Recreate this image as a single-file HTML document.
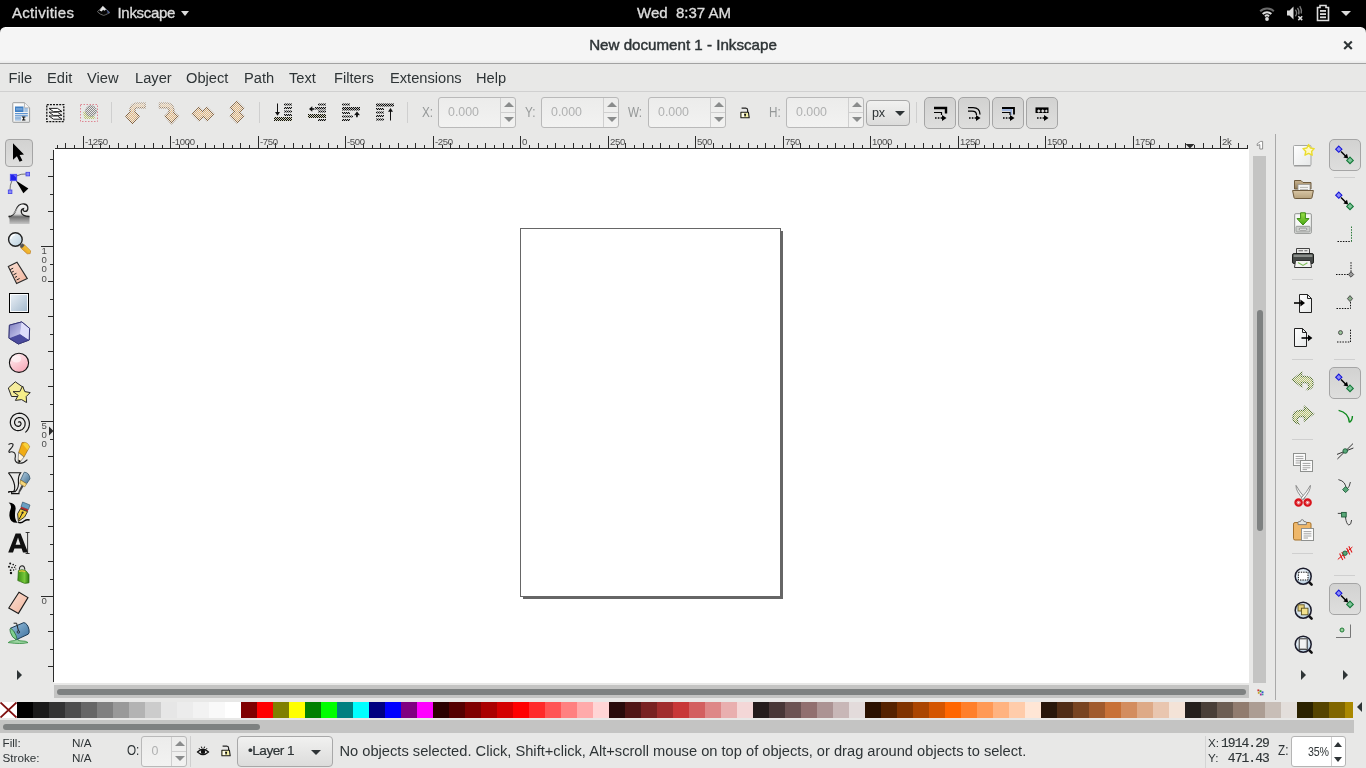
<!DOCTYPE html>
<html lang="en"><head><meta charset="utf-8"><title>New document 1 - Inkscape</title>
<style>
*{box-sizing:border-box;margin:0;padding:0}
html,body{width:1366px;height:768px;overflow:hidden;background:#e8e8e7;}
body{font-family:"Liberation Sans","DejaVu Sans",sans-serif;font-size:14.67px;color:#2e3436;position:relative}
#root{position:absolute;left:0;top:0;width:1366px;height:768px;overflow:hidden;background:#e8e8e7;will-change:transform}
.abs{position:absolute}
.ic{position:absolute;overflow:visible}
#topbar{position:absolute;left:0;top:0;width:1366px;height:34px;background:#000;color:#dcdcdc;font-weight:normal;font-size:15px;-webkit-text-stroke:0.35px #dcdcdc}
#topbar span{position:absolute;top:5px;white-space:nowrap;line-height:16px}
#title{position:absolute;left:0;top:27px;width:1366px;height:37px;background:linear-gradient(#ffffff 0,#ffffff 1px,#f5f5f5 1.5px,#f5f5f5 33px,#e9e9e9 36px);border-radius:5.5px 5.5px 0 0;border-bottom:1px solid #a2a2a2;}
#title .t{position:absolute;left:0;width:1366px;top:9px;text-align:center;font-weight:normal;font-size:15.15px;line-height:17px;color:#2e3436;-webkit-text-stroke:0.45px #2e3436}
#menubar{position:absolute;left:0;top:64px;width:1366px;height:28px;border-bottom:1px solid #d0d0d0;background:#e8e8e7}
#menubar span{position:absolute;top:6px;line-height:17px;white-space:nowrap;color:#2e3436}
.vsep{position:absolute;width:1px;background:#cfcfcf}
.hsep{position:absolute;height:1px;background:#cfcfcf}
.lbl{position:absolute;color:#959898;white-space:nowrap;line-height:17px;font-size:14.67px;transform:scaleX(0.8);transform-origin:0 0}
.spin{position:absolute;border:1px solid #b9b9b9;border-radius:3px;background:linear-gradient(#ececeb,#f2f2f1);}
.spin .v{position:absolute;left:0;top:0;line-height:17px;color:#b0b1b1;white-space:nowrap;font-size:12.4px}
.spin .d{position:absolute;top:0;bottom:0;width:1px;background:#cfcfcf}
.spin .h{position:absolute;height:1px;background:#cfcfcf}
.tri{position:absolute;width:0;height:0;border-left:5px solid transparent;border-right:5px solid transparent}
.tri.up{border-bottom:5px solid #8a8c8c}
.tri.dn{border-top:5px solid #8a8c8c}
.btn{position:absolute;border:1px solid #a8a8a8;border-radius:4px;background:linear-gradient(#f1f1f0,#dcdcdb);}
.tog{position:absolute;border:1px solid #a5a5a5;border-radius:5px;background:linear-gradient(#d2d2d1,#dededd);}
.rtxt{position:absolute;font-size:9.6px;line-height:10px;color:#4c4c4c;white-space:nowrap;letter-spacing:-0.35px}
.sm{position:absolute;font-size:11.7px;line-height:14px;white-space:nowrap;color:#2e3436}
.mono{position:absolute;font-family:"Liberation Mono","DejaVu Sans Mono",monospace;font-size:13px;letter-spacing:-0.97px;line-height:14px;white-space:pre;color:#2e3436;-webkit-text-stroke:0.15px #2e3436}
</style></head>
<body><div id="root">

<svg width="0" height="0" style="position:absolute"><defs>
<pattern id="stT" width="2" height="2" patternUnits="userSpaceOnUse"><rect width="1" height="1" fill="#e6b67a"/><rect x="1" y="1" width="1" height="1" fill="#e6b67a"/></pattern>
<pattern id="stTd" width="2" height="2" patternUnits="userSpaceOnUse"><rect width="1" height="1" fill="#86623c"/><rect x="1" y="1" width="1" height="1" fill="#86623c"/></pattern>
<pattern id="stK" width="2" height="2" patternUnits="userSpaceOnUse"><rect width="2" height="2" fill="#000" fill-opacity="0.22"/><rect width="1" height="1" fill="#0c0c0c"/><rect x="1" y="1" width="1" height="1" fill="#0c0c0c"/></pattern>
<pattern id="stY" width="2" height="2" patternUnits="userSpaceOnUse"><rect width="2" height="2" fill="#d0d0b8"/><rect width="1" height="1" fill="#0c0c0c"/><rect x="1" y="1" width="1" height="1" fill="#0c0c0c"/></pattern>
<pattern id="stG" width="2" height="2" patternUnits="userSpaceOnUse"><rect width="1" height="1" fill="#8a8a8a"/><rect x="1" y="1" width="1" height="1" fill="#8a8a8a"/></pattern>
<pattern id="stO" width="2" height="2" patternUnits="userSpaceOnUse"><rect width="1" height="1" fill="#b9c66c"/><rect x="1" y="1" width="1" height="1" fill="#b9c66c"/></pattern>
<pattern id="stOd" width="2" height="2" patternUnits="userSpaceOnUse"><rect width="1" height="1" fill="#5c7832"/><rect x="1" y="1" width="1" height="1" fill="#5c7832"/></pattern>
<linearGradient id="fadeTop" x1="0" y1="0" x2="0" y2="1"><stop offset="0" stop-color="#e8e8e7" stop-opacity="0.6"/><stop offset="1" stop-color="#e8e8e7" stop-opacity="0"/></linearGradient>
<linearGradient id="gPage" x1="0" y1="0" x2="1" y2="1"><stop offset="0" stop-color="#ffffff"/><stop offset="1" stop-color="#e6e8e8"/></linearGradient>
<linearGradient id="gBlue" x1="0" y1="0" x2="1" y2="1"><stop offset="0" stop-color="#eef3f8"/><stop offset="1" stop-color="#9fb6cb"/></linearGradient>
<linearGradient id="gPink" x1="0.2" y1="0" x2="0.8" y2="1"><stop offset="0" stop-color="#fff0f2"/><stop offset="1" stop-color="#f7a6b6"/></linearGradient>
<linearGradient id="gSalmon" x1="0" y1="0" x2="1" y2="1"><stop offset="0" stop-color="#fbe0d4"/><stop offset="1" stop-color="#f0b49c"/></linearGradient>
<linearGradient id="gGray" x1="0" y1="0" x2="0" y2="1"><stop offset="0" stop-color="#f6f6f6"/><stop offset="0.5" stop-color="#dcdcdc"/><stop offset="0.64" stop-color="#707070"/><stop offset="1" stop-color="#c6c6c6"/></linearGradient>
<linearGradient id="gLens" x1="0" y1="0" x2="1" y2="1"><stop offset="0" stop-color="#f4f9fc"/><stop offset="1" stop-color="#b9d0de"/></linearGradient>
<linearGradient id="gHandle" x1="1" y1="0" x2="0" y2="1"><stop offset="0" stop-color="#fbe04a"/><stop offset="1" stop-color="#e48a14"/></linearGradient>
<linearGradient id="gFold" x1="0" y1="0" x2="0" y2="1"><stop offset="0" stop-color="#c9b491"/><stop offset="1" stop-color="#8f7a58"/></linearGradient>
<linearGradient id="gFold2" x1="0" y1="0" x2="0" y2="1"><stop offset="0" stop-color="#d9c7a6"/><stop offset="1" stop-color="#b7a27c"/></linearGradient>
<linearGradient id="gGreen" x1="0" y1="0" x2="0" y2="1"><stop offset="0" stop-color="#9be04a"/><stop offset="1" stop-color="#4aa814"/></linearGradient>
<linearGradient id="gCube" x1="0" y1="0" x2="1" y2="1"><stop offset="0" stop-color="#7d7dbd"/><stop offset="1" stop-color="#d0d0f4"/></linearGradient>
<linearGradient id="gBucket" x1="0" y1="0" x2="1" y2="1"><stop offset="0" stop-color="#9cc3df"/><stop offset="1" stop-color="#3a6f9d"/></linearGradient>
<linearGradient id="gCan" x1="0" y1="0" x2="1" y2="0"><stop offset="0" stop-color="#3c8f14"/><stop offset="0.6" stop-color="#76c83a"/><stop offset="1" stop-color="#2f7a10"/></linearGradient>
<linearGradient id="gPen" x1="0" y1="0" x2="1" y2="1"><stop offset="0" stop-color="#b9d4e6"/><stop offset="1" stop-color="#3f6c8f"/></linearGradient>
<radialGradient id="gLensBtn" cx="0.4" cy="0.35" r="0.7"><stop offset="0" stop-color="#ffffff"/><stop offset="1" stop-color="#b5cde0"/></radialGradient>
</defs></svg>

<div id="topbar">
<span style="left:12px;letter-spacing:0.3px">Activities</span>
<span style="left:117.5px;letter-spacing:-0.3px">Inkscape</span>
<span style="left:637px;letter-spacing:0px">Wed&nbsp; 8:37 AM</span>
<svg class="ic" style="left:95.8px;top:2.3px" width="16" height="16" viewBox="0 0 16 16"><g transform="translate(0.3,1.1) scale(0.93)"><path d="M7 3.4 L14.6 10.2 Q8.5 13.4 7.8 13.2 Q4 12.3 1.2 9.3 Z" fill="#060606" stroke="#6e6e6e" stroke-width="1"/>
<path d="M7 3.2 L10.6 6.8 L8.6 8.2 L7.3 7.2 L5.9 9 L3.4 8 Z" fill="#e6e6e6"/>
<path d="M9.2 5.4 L14.2 10 L12.2 11 Q12 8 9.2 5.4Z" fill="#4e64a4"/></g></svg>

<div class="tri dn" style="left:181px;top:11px;border-top-color:#dcdcdc;border-left-width:4.5px;border-right-width:4.5px"></div>
<svg class="ic" style="left:1258.5px;top:5px" width="16" height="16" viewBox="0 0 16 16"><g fill="none" stroke="#dcdcdc" stroke-linecap="butt">
<path d="M1.2 6.2 A9.6 9.6 0 0 1 14.8 6.2" stroke-width="2" stroke="#6a6a6a"/>
<path d="M3.7 9 A6 6 0 0 1 12.3 9" stroke-width="2"/>
<path d="M5.9 11.3 A3 3 0 0 1 10.1 11.3" stroke-width="1.8"/></g>
<circle cx="8" cy="14" r="1.9" fill="#dcdcdc"/></svg>

<svg class="ic" style="left:1285.5px;top:5px" width="18" height="16" viewBox="0 0 18 16"><path d="M1 5.5 H3.5 L7.5 1.5 V14.5 L3.5 10.5 H1 Z" fill="#dcdcdc"/>
<g fill="none" stroke="#777" stroke-width="1.4"><path d="M9.3 4.8 A4.5 4.5 0 0 1 9.3 11.2"/><path d="M11.5 2.8 A7.5 7.5 0 0 1 12.6 9.5"/><path d="M13.8 1.2 A10 10 0 0 1 15.2 8.5"/></g>
<path d="M12.3 11.2 L16.2 15.1 M16.2 11.2 L12.3 15.1" stroke="#dcdcdc" stroke-width="1.5"/></svg>

<svg class="ic" style="left:1314.5px;top:4px" width="16" height="18" viewBox="0 0 16 18"><path d="M5 1.5 H11 V3.5 H13.5 V16.5 H2.5 V3.5 H5 Z" fill="none" stroke="#dcdcdc" stroke-width="1.6"/>
<rect x="5" y="6" width="6" height="1.8" fill="#dcdcdc"/><rect x="5" y="9.2" width="6" height="1.8" fill="#dcdcdc"/><rect x="5" y="12.4" width="6" height="1.8" fill="#dcdcdc"/></svg>

<div class="tri dn" style="left:1341px;top:11px;border-top-color:#dcdcdc;border-left-width:5px;border-right-width:5px"></div>
</div>
<div id="title"><div class="t">New document 1 - Inkscape</div>
<svg class="ic" style="left:1342px;top:12px" width="11" height="11" viewBox="0 0 11 11"><path d="M2.2 2.5 L9.8 10.1 M9.8 2.5 L2.2 10.1" stroke="#2e3436" stroke-width="2.1" fill="none"/></svg>
</div>
<div id="menubar">
<span style="left:8.5px">File</span>
<span style="left:47px">Edit</span>
<span style="left:87px">View</span>
<span style="left:135px">Layer</span>
<span style="left:186px">Object</span>
<span style="left:244px">Path</span>
<span style="left:289px">Text</span>
<span style="left:334px">Filters</span>
<span style="left:390px">Extensions</span>
<span style="left:476px">Help</span>
</div>
<svg class="ic" style="left:9px;top:100px" width="24" height="24" viewBox="0 0 24 24"><path d="M3.8 3.2 Q3.8 2.7 4.3 2.7 H15.5 L20.6 7.8 V21.8 Q20.6 22.3 20.1 22.3 H4.3 Q3.8 22.3 3.8 21.8 Z" fill="url(#gPage)" stroke="#9a9c9c" stroke-width="1"/>
<path d="M15.5 2.7 V7.8 H20.6" fill="#f4f4f4" stroke="#aaa" stroke-width="0.8"/>
<rect x="6" y="6.5" width="8.5" height="5.5" fill="#3f7fc4"/><rect x="15.2" y="8.5" width="3.6" height="1" fill="#5b93d1"/><rect x="15.2" y="10.5" width="3.6" height="1" fill="#5b93d1"/>
<rect x="6" y="13" width="12.8" height="1.2" fill="#5b93d1"/><rect x="6" y="15.2" width="12.8" height="1.2" fill="#5b93d1"/><rect x="6" y="17.4" width="6" height="1.2" fill="#5b93d1"/><rect x="6" y="19.4" width="6" height="1" fill="#7aa9dc"/>
<rect x="7" y="8" width="6.5" height="2.4" fill="#8db6e3" opacity="0.6"/>
<path d="M13 17 H16.4 M13 20 H16.4 M14.7 17 V20" stroke="#111" stroke-width="1.2"/></svg>

<svg class="ic" style="left:43px;top:100px" width="24" height="24" viewBox="0 0 24 24"><rect x="3.8" y="4.6" width="17" height="17" fill="none" stroke="#111" stroke-width="1.3" stroke-dasharray="2 1.1"/>
<g fill="#fff" stroke="#222" stroke-width="1"><path d="M6 16 L14.5 16 L19 19.2 L10.5 19.2 Z"/><path d="M6 12.2 L14.5 12.2 L19 15.4 L10.5 15.4 Z"/><path d="M6 8.4 L14.5 8.4 L19 11.6 L10.5 11.6 Z"/></g></svg>

<svg class="ic" style="left:77px;top:100px" width="24" height="24" viewBox="0 0 24 24"><rect x="3.5" y="4.5" width="17" height="17" fill="none" stroke="#dc7c88" stroke-width="0.9" stroke-dasharray="1.5 1.5"/>
<path d="M6 12.5 L9.5 10.5 L16 13.5 L18.5 19 L7.5 19 Z" fill="url(#stO)"/>
<circle cx="14" cy="11" r="5.4" fill="url(#stG)"/><circle cx="14" cy="11" r="5.4" fill="none" stroke="#777" stroke-width="0.7" stroke-dasharray="1 1"/></svg>

<div class="vsep" style="left:111px;top:102px;height:21px"></div>
<svg class="ic" style="left:123px;top:100px" width="24" height="24" viewBox="0 0 24 24"><path d="M22.1 2.9 V7.7 H14 A2 2 0 0 0 12 9.7 V12.2 L16 16 L9.45 23.6 L2.9 16 L7 12.2 V9.9 A7 7 0 0 1 14 2.9 Z" fill="url(#stT)"/><path d="M22.1 2.9 V7.7 H14 A2 2 0 0 0 12 9.7 V12.2 L16 16 L9.45 23.6 L2.9 16 L7 12.2 V9.9 A7 7 0 0 1 14 2.9 Z" fill="none" stroke="url(#stTd)" stroke-width="1.5"/><rect x="0" y="1" width="24" height="13" fill="url(#fadeTop)"/></svg>

<svg class="ic" style="left:157px;top:100px" width="24" height="24" viewBox="0 0 24 24"><path d="M2.5 2.9 V7.7 H10 A2 2 0 0 1 12 9.7 V12.3 L8 16.3 L14.5 23.3 L21.2 16.3 L16.8 12.3 V9.9 A7 7 0 0 0 9.8 2.9 Z" fill="url(#stT)"/><path d="M2.5 2.9 V7.7 H10 A2 2 0 0 1 12 9.7 V12.3 L8 16.3 L14.5 23.3 L21.2 16.3 L16.8 12.3 V9.9 A7 7 0 0 0 9.8 2.9 Z" fill="none" stroke="url(#stTd)" stroke-width="1.5"/><rect x="0" y="1" width="24" height="13" fill="url(#fadeTop)"/></svg>

<svg class="ic" style="left:191px;top:100px" width="24" height="24" viewBox="0 0 24 24"><path d="M1.5 14 L8 7.5 L12 11.5 L16 7.5 L22.5 14 L16 20.5 L12 16.5 L8 20.5 Z" fill="url(#stT)"/><path d="M1.5 14 L8 7.5 L12 11.5 L16 7.5 L22.5 14 L16 20.5 L12 16.5 L8 20.5 Z" fill="none" stroke="url(#stTd)" stroke-width="1.5"/></svg>

<svg class="ic" style="left:225px;top:100px" width="24" height="24" viewBox="0 0 24 24"><path d="M12 1.5 L18.5 8 L14.5 12 L18.5 16 L12 22.7 L5.5 16 L9.5 12 L5.5 8 Z" fill="url(#stT)"/><path d="M12 1.5 L18.5 8 L14.5 12 L18.5 16 L12 22.7 L5.5 16 L9.5 12 L5.5 8 Z" fill="none" stroke="url(#stTd)" stroke-width="1.5"/></svg>

<div class="vsep" style="left:259px;top:102px;height:21px"></div>
<svg class="ic" style="left:271px;top:100px" width="24" height="24" viewBox="0 0 24 24"><g transform="translate(3,0)"><g fill="url(#stK)"><rect x="10" y="3.5" width="8" height="2"/><rect x="10" y="7" width="8" height="2"/><rect x="10" y="10.5" width="8" height="2"/><rect x="10" y="14" width="8" height="2"/>
</g><rect x="3" y="3.5" width="1" height="10" fill="#111"/><path d="M1 12 H6 L3.5 15.8 Z" fill="#111"/><rect x="0" y="17" width="18" height="4" fill="url(#stY)"/></g></svg>

<svg class="ic" style="left:305px;top:100px" width="24" height="24" viewBox="0 0 24 24"><g transform="translate(3,0)"><g fill="url(#stK)"><rect x="10" y="3.5" width="8" height="2"/><rect x="7" y="7" width="11" height="2.5"/><rect x="10" y="10.5" width="8" height="2"/><rect x="10" y="19" width="8" height="2"/></g><path d="M1 9 L4.2 6.2 L4.4 8.2 L6.4 8.2 V9.8 H4.4 L4.2 11.8 Z" fill="#111"/><rect x="0" y="14" width="18" height="4" fill="url(#stY)"/></g></svg>

<svg class="ic" style="left:339px;top:100px" width="24" height="24" viewBox="0 0 24 24"><g transform="translate(3,0)"><g fill="url(#stK)"><rect x="0" y="3.5" width="8" height="2"/><rect x="0" y="12" width="8" height="2"/><rect x="0" y="15.5" width="11" height="2"/><rect x="0" y="19" width="8" height="2"/></g><path d="M12 15.2 L15 11.6 L18 15.2 L16 15 L15.6 17.2 H14.2 L14 15 Z" fill="#111"/><rect x="0" y="7" width="18" height="3.5" fill="url(#stK)"/></g></svg>

<svg class="ic" style="left:373px;top:100px" width="24" height="24" viewBox="0 0 24 24"><g transform="translate(3,0)"><g fill="url(#stK)"><rect x="0" y="3.5" width="18" height="3"/><rect x="0" y="8" width="8" height="2"/><rect x="0" y="11.5" width="8" height="2"/><rect x="0" y="15" width="8" height="2"/><rect x="0" y="18.5" width="8" height="2"/>
</g><rect x="14" y="10.5" width="1" height="10" fill="#111"/><path d="M12 11.8 L14.5 8 L17 11.8 Z" fill="#111"/></g></svg>

<div class="vsep" style="left:407px;top:102px;height:21px"></div>
<span class="lbl" style="left:422px;top:104px">X:</span>
<div class="spin" style="left:438px;top:97px;width:78px;height:31px;"><span class="v" style="left:9px;top:6px">0.000</span><div class="d" style="right:14px"></div><div class="h" style="right:0;width:14px;top:14px"></div><div class="tri up" style="left:64.5px;top:4.25px"></div><div class="tri dn" style="left:64.5px;top:18.75px"></div></div>
<span class="lbl" style="left:525px;top:104px">Y:</span>
<div class="spin" style="left:541px;top:97px;width:78px;height:31px;"><span class="v" style="left:9px;top:6px">0.000</span><div class="d" style="right:14px"></div><div class="h" style="right:0;width:14px;top:14px"></div><div class="tri up" style="left:64.5px;top:4.25px"></div><div class="tri dn" style="left:64.5px;top:18.75px"></div></div>
<span class="lbl" style="left:628px;top:104px">W:</span>
<div class="spin" style="left:648px;top:97px;width:78px;height:31px;"><span class="v" style="left:9px;top:6px">0.000</span><div class="d" style="right:14px"></div><div class="h" style="right:0;width:14px;top:14px"></div><div class="tri up" style="left:64.5px;top:4.25px"></div><div class="tri dn" style="left:64.5px;top:18.75px"></div></div>
<span class="lbl" style="left:769px;top:104px">H:</span>
<div class="spin" style="left:786px;top:97px;width:78px;height:31px;"><span class="v" style="left:9px;top:6px">0.000</span><div class="d" style="right:14px"></div><div class="h" style="right:0;width:14px;top:14px"></div><div class="tri up" style="left:64.5px;top:4.25px"></div><div class="tri dn" style="left:64.5px;top:18.75px"></div></div>
<svg class="ic" style="left:738.5px;top:106.5px" width="12" height="12" viewBox="0 0 12 12"><path d="M2.6 1.1 H6.8 Q8.6 1.1 8.6 3 V5" fill="none" stroke="#222" stroke-width="1.2"/>
<path d="M1.9 5.2 H9.4 L10.2 10.8 H1.9 Z" fill="#f4f0a8" stroke="#1a1a1a" stroke-width="1.1" stroke-linejoin="round"/><path d="M2.8 6 H5 V10 H2.8 Z" fill="#fff" opacity="0.8"/><path d="M5 6.8 H7.2 L6.6 9.6 H5.6 Z" fill="#111"/></svg>

<div class="btn" style="left:866px;top:100px;width:44px;height:26px"><span style="position:absolute;left:5px;top:3.5px;line-height:17px;font-size:12.6px;letter-spacing:-0.3px">px</span><div class="tri dn" style="left:27.5px;top:10px;border-top-color:#2e3436;border-left-width:5px;border-right-width:5px;border-top-width:5.5px"></div></div>
<div class="vsep" style="left:916px;top:102px;height:21px"></div>
<div class="tog" style="left:924px;top:97px;width:32px;height:32px"></div>
<svg class="ic" style="left:932px;top:105px" width="16" height="16" viewBox="0 0 16 16"><path d="M2 3 H14 V8.5" fill="none" stroke="#000" stroke-width="2.4"/><path d="M2 7.5 H9.5 V10" fill="none" stroke="#000" stroke-width="1.2"/><path d="M3 13 H10" stroke="#000" stroke-width="1.3" stroke-dasharray="1.6 1.2" fill="none"/><path d="M10 10 L14.5 13 L10 16 Z" fill="#000"/></svg>

<div class="tog" style="left:958px;top:97px;width:32px;height:32px"></div>
<svg class="ic" style="left:966px;top:105px" width="16" height="16" viewBox="0 0 16 16"><path d="M2 2.6 H7 Q14 2.6 14 9.5" fill="none" stroke="#000" stroke-width="1.3"/><path d="M2 6.2 H6 Q10.5 6.2 10.5 10" fill="none" stroke="#000" stroke-width="1.3"/><path d="M3 13 H10" stroke="#000" stroke-width="1.3" stroke-dasharray="1.6 1.2" fill="none"/><path d="M10 10 L14.5 13 L10 16 Z" fill="#000"/></svg>

<div class="tog" style="left:992px;top:97px;width:32px;height:32px"></div>
<svg class="ic" style="left:1000px;top:105px" width="16" height="16" viewBox="0 0 16 16"><path d="M2 4 H12 V10 H10 V6 H2 Z" fill="#9fb4dc"/><path d="M2 3 H14 V9.5" fill="none" stroke="#000" stroke-width="1.8"/><path d="M2 7.5 H10 V10" fill="none" stroke="#000" stroke-width="1.2"/><path d="M3 13 H10" stroke="#000" stroke-width="1.3" stroke-dasharray="1.6 1.2" fill="none"/><path d="M10 10 L14.5 13 L10 16 Z" fill="#000"/></svg>

<div class="tog" style="left:1026px;top:97px;width:32px;height:32px"></div>
<svg class="ic" style="left:1034px;top:105px" width="16" height="16" viewBox="0 0 16 16"><path d="M1.5 2.4 H14.5 V8 H1.5 Z" fill="#000"/><path d="M3 6 L4.8 4.2 L6.6 6 L4.8 7.8 Z M7 6 L8.8 4.2 L10.6 6 L8.8 7.8 Z M10.8 6 L12.3 4.5 L13.8 6 L12.3 7.5 Z" fill="#d8d8d8"/><path d="M3 13 H10" stroke="#000" stroke-width="1.3" stroke-dasharray="1.6 1.2" fill="none"/><path d="M10 10 L14.5 13 L10 16 Z" fill="#000"/></svg>

<div class="tog" style="left:5px;top:139px;width:28px;height:28px;border-radius:4px"></div>
<svg class="ic" style="left:7px;top:141px" width="24" height="24" viewBox="0 0 24 24"><path d="M6 2.3 V18.8 L9.9 15.2 L12.6 20.8 L15.4 19.5 L12.6 14 L17 13.4 Z" fill="#000"/></svg>

<svg class="ic" style="left:7px;top:171px" width="24" height="24" viewBox="0 0 24 24"><path d="M9.5 5 Q14 2.6 19 3" fill="none" stroke="#666" stroke-width="0.9"/><path d="M5 9.5 Q2.8 14 3 19" fill="none" stroke="#666" stroke-width="0.9"/>
<rect x="3.4" y="3.4" width="6.2" height="6.2" fill="#2424ea" stroke="#5252f4" stroke-width="1"/><path d="M6.5 4 H9 V6.5 Z" fill="#8a8af8" opacity="0.7"/>
<rect x="19" y="1.3" width="3.6" height="3.6" fill="#8a8af5" stroke="#4040e8" stroke-width="0.8"/><rect x="1.3" y="19" width="3.6" height="3.6" fill="#8a8af5" stroke="#4040e8" stroke-width="0.8"/>
<path d="M8.8 9.6 L21.4 17.5 L16.4 22.2 Z" fill="#000"/></svg>

<svg class="ic" style="left:7px;top:201px" width="24" height="24" viewBox="0 0 24 24"><path d="M1.5 15.5 Q6.5 15.5 9 9 Q11.5 2.5 17 3 Q21.3 3.6 20.8 8 Q20.2 10.8 17.5 10.4 Q15.4 9.6 16.4 7.6 Q14 8 14.3 11 Q14.8 15.3 22.5 15.5 V23 H2.5 V18 Z" fill="url(#gGray)"/>
<path d="M1.5 15.5 Q6.5 15.5 9 9 Q11.5 2.5 17 3 Q21.3 3.6 20.8 8 Q20.2 10.8 17.5 10.4 Q15.4 9.6 16.4 7.6 Q14 8 14.3 11 Q14.8 15.3 22.5 15.5" fill="none" stroke="#222" stroke-width="1.3"/>
<path d="M3.5 14.2 Q7.5 13.6 9.8 8.3 Q12 3.6 16.6 4.3" fill="none" stroke="#fff" stroke-width="0.8" opacity="0.8"/></svg>

<svg class="ic" style="left:7px;top:231px" width="24" height="24" viewBox="0 0 24 24"><path d="M13.4 16.6 L16.8 13.2 L23.6 19.8 L23.2 22.6 L20.2 22.8 Z" fill="url(#gHandle)" stroke="#b87414" stroke-width="0.6"/><path d="M12.6 15 L15.4 12.2 L17.6 14.4 L14.8 17.2 Z" fill="#555"/>
<circle cx="8.4" cy="8.5" r="6.8" fill="url(#gLens)" stroke="#222" stroke-width="1.4"/><path d="M3.8 8 A4.8 4.8 0 0 1 8 3.6" fill="none" stroke="#fff" stroke-width="1.2"/></svg>

<svg class="ic" style="left:7px;top:261px" width="24" height="24" viewBox="0 0 24 24"><path d="M1.3 5.6 L10 1.2 L20.3 17.6 L9.6 22.5 Z" fill="url(#gSalmon)" stroke="#2a2a2a" stroke-width="1.1"/>
<path d="M3.2 8.6 L6.2 7.1 M4.8 11.2 L6.8 10.2 M6.4 13.8 L9.4 12.3 M8 16.4 L10 15.4 M9.6 19 L12.6 17.5" stroke="#222" stroke-width="1"/></svg>

<svg class="ic" style="left:7px;top:291px" width="24" height="24" viewBox="0 0 24 24"><rect x="2.5" y="2.5" width="19" height="19" fill="url(#gBlue)" stroke="#000" stroke-width="1"/><rect x="3.5" y="3.5" width="17" height="17" fill="none" stroke="#fff" stroke-width="1" opacity="0.9"/></svg>

<svg class="ic" style="left:7px;top:321px" width="24" height="24" viewBox="0 0 24 24"><path d="M2.4 4.2 L14.8 0.9 L22.6 7.4 L22.2 19 L11.4 23 L2 17.2 Z" fill="#dcdcfa" stroke="#3a3a7a" stroke-width="1"/>
<path d="M2.4 4.2 L14.8 0.9 L13.2 13 L2 17.2 Z" fill="url(#gCube)"/><path d="M2 17.2 L13.2 13 L22.2 19 L11.4 23 Z" fill="#4b4b9e"/><path d="M14.8 0.9 L22.6 7.4 L22.2 19 L13.2 13 Z" fill="#dedefb"/>
<path d="M2.4 4.2 L14.8 0.9 L22.6 7.4 L22.2 19 L11.4 23 L2 17.2 Z" fill="none" stroke="#38387a" stroke-width="1"/></svg>

<svg class="ic" style="left:7px;top:351px" width="24" height="24" viewBox="0 0 24 24"><circle cx="12" cy="11.8" r="9.6" fill="url(#gPink)" stroke="#111" stroke-width="1.1"/><ellipse cx="9.5" cy="8" rx="4.6" ry="3.4" fill="#fff" opacity="0.55"/></svg>

<svg class="ic" style="left:7px;top:381px" width="24" height="24" viewBox="0 0 24 24"><path d="M8.3 0.8 L16 6.2 L13 15.5 L4.5 15.5 L1.3 7 Z" fill="#f5ec9c" stroke="#2a2a2a" stroke-width="1"/>
<path d="M15.6 5 L17.8 10.6 L23.2 11.6 L19.2 15.6 L19.6 21.6 L14.6 18.6 L8.4 19.4 L11.2 14.4 L6 10.6 L12.8 10.6 Z" fill="#f7ef8a" stroke="#2a2a2a" stroke-width="1"/></svg>

<svg class="ic" style="left:7px;top:411px" width="24" height="24" viewBox="0 0 24 24"><path d="M11.5 11.5 L11.5 11.4 L11.5 11.3 L11.6 11.2 L11.7 11.1 L11.8 11.0 L11.9 10.9 L12.0 10.9 L12.1 10.8 L12.3 10.8 L12.5 10.8 L12.6 10.8 L12.8 10.8 L13.0 10.9 L13.2 11.0 L13.3 11.1 L13.5 11.3 L13.6 11.5 L13.7 11.7 L13.8 11.9 L13.9 12.1 L14.0 12.4 L14.0 12.7 L14.0 12.9 L13.9 13.2 L13.8 13.5 L13.7 13.8 L13.5 14.0 L13.4 14.3 L13.1 14.5 L12.9 14.7 L12.6 14.9 L12.3 15.1 L12.0 15.2 L11.6 15.3 L11.2 15.3 L10.9 15.3 L10.5 15.2 L10.1 15.1 L9.7 15.0 L9.4 14.8 L9.0 14.5 L8.7 14.2 L8.4 13.9 L8.2 13.5 L7.9 13.1 L7.8 12.7 L7.6 12.2 L7.6 11.7 L7.6 11.2 L7.6 10.7 L7.7 10.2 L7.8 9.7 L8.1 9.2 L8.3 8.8 L8.6 8.3 L9.0 7.9 L9.4 7.6 L9.9 7.2 L10.4 7.0 L11.0 6.8 L11.5 6.6 L12.1 6.6 L12.7 6.6 L13.3 6.6 L13.9 6.8 L14.5 7.0 L15.1 7.3 L15.7 7.6 L16.2 8.0 L16.6 8.5 L17.0 9.1 L17.4 9.7 L17.7 10.3 L17.9 11.0 L18.1 11.7 L18.1 12.4 L18.1 13.2 L18.0 13.9 L17.9 14.6 L17.6 15.4 L17.3 16.0 L16.8 16.7 L16.4 17.3 L15.8 17.9 L15.2 18.4 L14.5 18.8 L13.7 19.1 L13.0 19.4 L12.2 19.5 L11.3 19.6 L10.5 19.6 L9.7 19.5 L8.8 19.3 L8.0 18.9 L7.3 18.5 L6.5 18.0 L5.8 17.4 L5.2 16.7 L4.7 16.0 L4.2 15.2 L3.9 14.3 L3.6 13.4 L3.4 12.4 L3.3 11.5 L3.4 10.5 L3.5 9.5 L3.8 8.5 L4.1 7.6 L4.6 6.7 L5.2 5.8 L5.8 5.0 L6.6 4.3 L7.4 3.7 L8.3 3.2 L9.3 2.8 L10.3 2.5 L11.3 2.3 L12.4 2.2 L13.5 2.3 L14.5 2.4 L15.6 2.7 L16.6 3.2 L17.6 3.7 L18.5 4.4 L19.3 5.1 L20.1 6.0 L20.8 7.0 L21.3 8.0 L21.8 9.1 L22.1 10.3 L22.3 11.5 L22.4 12.7 L22.3 13.9 L22.1 15.1 L21.8 16.3 L21.3 17.5 L20.7 18.6 L20.0 19.6 L19.2 20.6 L18.2 21.4" fill="none" stroke="#111" stroke-width="1.2"/></svg>

<svg class="ic" style="left:7px;top:441px" width="24" height="24" viewBox="0 0 24 24"><path d="M1.5 3.5 Q4.5 1.8 6 3.2 Q6.5 5 3.5 8 Q1 10.6 2.2 11.4 Q4.6 10.2 7 11.4 Q9.2 13.2 8 17.6 Q7.8 20.8 10.8 22 Q15.6 23.4 20.4 18.6" fill="none" stroke="#222" stroke-width="1.1"/>
<path d="M15 1.6 Q20.4 0.4 22.6 5.8 L17 16 L11.6 11.6 Z" fill="#f0ac14" stroke="#8a5a10" stroke-width="0.6"/><path d="M18 1.6 Q21.4 2.6 22.4 6 L20.6 9 L16 3.4Z" fill="#f8d23c"/>
<path d="M11.6 11.6 L17 16 L12.4 21.8 L11 21.4 Z" fill="#fff4dc" stroke="#555" stroke-width="0.6"/><path d="M11.4 18.4 L13.8 20 L11.6 22.4 Z" fill="#000"/></svg>

<svg class="ic" style="left:7px;top:471px" width="24" height="24" viewBox="0 0 24 24"><path d="M1.5 1.8 H13.6 Q11 5 11.4 10.4 Q12.2 17 8.2 20.6 H4.6 V22.6 H12 V21" fill="none" stroke="#111" stroke-width="1.1"/><path d="M1.5 1.8 Q6.6 8 7.6 14.4 Q8.2 18.8 6.6 20.6 H1.8 V22" fill="none" stroke="#111" stroke-width="1.1"/>
<path d="M17.2 1.2 Q22.4 1.4 23 7.8 L19.6 12.8 L13.6 9 Z" fill="url(#gPen)" stroke="#27485f" stroke-width="0.7"/>
<path d="M13.6 9 L19.6 12.8 L17.8 15.8 L12.8 12.6 Z" fill="#f5d67a" stroke="#8a6a20" stroke-width="0.6"/><path d="M14.6 14 L16.6 15.2 L12.8 21.4 L11.4 20.6 Z" fill="#444"/></svg>

<svg class="ic" style="left:7px;top:501px" width="24" height="24" viewBox="0 0 24 24"><path d="M1.6 1.4 Q9.2 2 8.6 8 Q7.6 13 8.2 17 Q8.8 20.4 10.8 21.8 Q3 22.4 2.4 15 Q2.2 11 3.8 7.4 Q4.8 3.6 1.6 1.4 Z" fill="#000"/>
<path d="M11.2 21.4 Q14.4 22.4 17.2 20 Q19.8 18 22.6 19" fill="none" stroke="#000" stroke-width="1.5"/>
<path d="M15.6 1 L23 4 L21.4 8.6 L14 5.8 Z" fill="#6aa0c4" stroke="#27485f" stroke-width="0.6"/><path d="M14 5.8 L21.4 8.6 L20.6 10.6 L13.4 7.8 Z" fill="#b22a2a"/>
<path d="M13.4 7.8 L20.6 10.6 L17.6 16 L11.4 20.4 L10.6 12.8 Z" fill="#f3cf3e" stroke="#222" stroke-width="0.9"/><path d="M15.6 11.6 L12 18.6" stroke="#222" stroke-width="1"/><circle cx="15.6" cy="11.6" r="1.1" fill="#222"/></svg>

<svg class="ic" style="left:7px;top:531px" width="24" height="24" viewBox="0 0 24 24"><path d="M1.2 21.6 L8.6 2.4 H13.6 L21 21.6 H16 L14.6 17.4 H7.4 L6 21.6 Z M8.6 13.8 H13.4 L11 6.6 Z" fill="#111"/>
<path d="M18.6 1.5 H22.6 M18.6 22.5 H22.6 M20.6 1.5 V22.5" stroke="#222" stroke-width="0.9"/></svg>

<svg class="ic" style="left:7px;top:561px" width="24" height="24" viewBox="0 0 24 24"><g fill="#111"><circle cx="3.2" cy="2.4" r="1"/><circle cx="6.2" cy="3.6" r="0.8"/><circle cx="2" cy="5.8" r="1"/><circle cx="5" cy="6.6" r="0.8"/><circle cx="7.6" cy="6.2" r="0.7"/><circle cx="3.6" cy="9.2" r="0.9"/><circle cx="6.6" cy="9" r="0.7"/><circle cx="4" cy="12" r="1.2"/><circle cx="8.6" cy="4.6" r="0.6"/><circle cx="8.8" cy="8" r="0.6"/></g>
<path d="M12.4 8.8 Q12.2 5.2 15 4.8 Q17.8 5 17.8 8.8" fill="#ddd" stroke="#222" stroke-width="1.1"/>
<path d="M11.4 9.6 Q15 7.6 19 9.8 L22 13.6 V21.8 Q17 23.4 13.4 20.6 L10.8 19.6 Z" fill="url(#gCan)" stroke="#2a6a0e" stroke-width="0.7"/><path d="M11.8 9.8 Q15 8.4 18.4 10 L18 11.2 Q15 10 12.2 11 Z" fill="#e8c63c"/></svg>

<svg class="ic" style="left:7px;top:591px" width="24" height="24" viewBox="0 0 24 24"><path d="M12 1.2 L21 6.6 L11.4 22.4 L1.8 17 Z" fill="url(#gSalmon)" stroke="#1a1a1a" stroke-width="1.1"/></svg>

<svg class="ic" style="left:7px;top:621px" width="24" height="24" viewBox="0 0 24 24"><path d="M1.2 21.6 Q3 19.6 7.6 19.6 Q9.2 19.4 9.2 17 L10.8 17.6 Q10.4 19.8 13 19.8 Q19.6 19.8 21 21.6 Q14 23.4 1.2 21.6 Z" fill="#9ad4a0" stroke="#2f8a3c" stroke-width="0.8"/>
<path d="M3.6 7.2 L16.8 1.6 Q20.6 2.4 22 8.6 Q22.6 12.4 21.2 13.2 L9.6 18.6 Q5 16 3.6 7.2 Z" fill="url(#gBucket)" stroke="#1c3a54" stroke-width="1"/>
<path d="M3.6 7.2 Q2.4 7.6 3.4 11.4 Q5 16.8 9.2 18.6 Q10.6 18.2 9 14.4 Q7 9 3.6 7.2 Z" fill="#7fcf8e" stroke="#2a6a3a" stroke-width="0.8"/>
<path d="M6.6 2.2 H9.6 L11.6 10.4" fill="none" stroke="#222" stroke-width="1"/><circle cx="11.4" cy="11" r="1.3" fill="#5a7fa6" stroke="#222" stroke-width="0.7"/></svg>

<div class="abs" style="left:17px;top:670px;width:0;height:0;border-top:5px solid transparent;border-bottom:5px solid transparent;border-left:5px solid #2e3436"></div>
<div class="abs" style="left:54px;top:149px;width:1195px;height:534px;background:#fff"></div>
<svg class="ic" style="left:0;top:0" width="1366" height="768" viewBox="0 0 1366 768" shape-rendering="crispEdges">
<rect x="55" y="148" width="1193" height="1" fill="#2b2b2b"/>
<rect x="57" y="145" width="1" height="3" fill="#2b2b2b"/>
<rect x="65" y="143" width="1" height="5" fill="#2b2b2b"/>
<rect x="74" y="145" width="1" height="3" fill="#2b2b2b"/>
<rect x="83" y="136" width="1" height="12" fill="#2b2b2b"/>
<rect x="92" y="145" width="1" height="3" fill="#2b2b2b"/>
<rect x="100" y="143" width="1" height="5" fill="#2b2b2b"/>
<rect x="109" y="145" width="1" height="3" fill="#2b2b2b"/>
<rect x="118" y="143" width="1" height="5" fill="#2b2b2b"/>
<rect x="127" y="145" width="1" height="3" fill="#2b2b2b"/>
<rect x="135" y="143" width="1" height="5" fill="#2b2b2b"/>
<rect x="144" y="145" width="1" height="3" fill="#2b2b2b"/>
<rect x="153" y="143" width="1" height="5" fill="#2b2b2b"/>
<rect x="162" y="145" width="1" height="3" fill="#2b2b2b"/>
<rect x="170" y="136" width="1" height="12" fill="#2b2b2b"/>
<rect x="179" y="145" width="1" height="3" fill="#2b2b2b"/>
<rect x="188" y="143" width="1" height="5" fill="#2b2b2b"/>
<rect x="197" y="145" width="1" height="3" fill="#2b2b2b"/>
<rect x="205" y="143" width="1" height="5" fill="#2b2b2b"/>
<rect x="214" y="145" width="1" height="3" fill="#2b2b2b"/>
<rect x="223" y="143" width="1" height="5" fill="#2b2b2b"/>
<rect x="232" y="145" width="1" height="3" fill="#2b2b2b"/>
<rect x="240" y="143" width="1" height="5" fill="#2b2b2b"/>
<rect x="249" y="145" width="1" height="3" fill="#2b2b2b"/>
<rect x="258" y="136" width="1" height="12" fill="#2b2b2b"/>
<rect x="267" y="145" width="1" height="3" fill="#2b2b2b"/>
<rect x="275" y="143" width="1" height="5" fill="#2b2b2b"/>
<rect x="284" y="145" width="1" height="3" fill="#2b2b2b"/>
<rect x="293" y="143" width="1" height="5" fill="#2b2b2b"/>
<rect x="302" y="145" width="1" height="3" fill="#2b2b2b"/>
<rect x="310" y="143" width="1" height="5" fill="#2b2b2b"/>
<rect x="319" y="145" width="1" height="3" fill="#2b2b2b"/>
<rect x="328" y="143" width="1" height="5" fill="#2b2b2b"/>
<rect x="337" y="145" width="1" height="3" fill="#2b2b2b"/>
<rect x="345" y="136" width="1" height="12" fill="#2b2b2b"/>
<rect x="354" y="145" width="1" height="3" fill="#2b2b2b"/>
<rect x="363" y="143" width="1" height="5" fill="#2b2b2b"/>
<rect x="372" y="145" width="1" height="3" fill="#2b2b2b"/>
<rect x="380" y="143" width="1" height="5" fill="#2b2b2b"/>
<rect x="389" y="145" width="1" height="3" fill="#2b2b2b"/>
<rect x="398" y="143" width="1" height="5" fill="#2b2b2b"/>
<rect x="407" y="145" width="1" height="3" fill="#2b2b2b"/>
<rect x="415" y="143" width="1" height="5" fill="#2b2b2b"/>
<rect x="424" y="145" width="1" height="3" fill="#2b2b2b"/>
<rect x="433" y="136" width="1" height="12" fill="#2b2b2b"/>
<rect x="442" y="145" width="1" height="3" fill="#2b2b2b"/>
<rect x="450" y="143" width="1" height="5" fill="#2b2b2b"/>
<rect x="459" y="145" width="1" height="3" fill="#2b2b2b"/>
<rect x="468" y="143" width="1" height="5" fill="#2b2b2b"/>
<rect x="477" y="145" width="1" height="3" fill="#2b2b2b"/>
<rect x="485" y="143" width="1" height="5" fill="#2b2b2b"/>
<rect x="494" y="145" width="1" height="3" fill="#2b2b2b"/>
<rect x="503" y="143" width="1" height="5" fill="#2b2b2b"/>
<rect x="512" y="145" width="1" height="3" fill="#2b2b2b"/>
<rect x="520" y="136" width="1" height="12" fill="#2b2b2b"/>
<rect x="529" y="145" width="1" height="3" fill="#2b2b2b"/>
<rect x="538" y="143" width="1" height="5" fill="#2b2b2b"/>
<rect x="547" y="145" width="1" height="3" fill="#2b2b2b"/>
<rect x="555" y="143" width="1" height="5" fill="#2b2b2b"/>
<rect x="564" y="145" width="1" height="3" fill="#2b2b2b"/>
<rect x="573" y="143" width="1" height="5" fill="#2b2b2b"/>
<rect x="582" y="145" width="1" height="3" fill="#2b2b2b"/>
<rect x="590" y="143" width="1" height="5" fill="#2b2b2b"/>
<rect x="599" y="145" width="1" height="3" fill="#2b2b2b"/>
<rect x="608" y="136" width="1" height="12" fill="#2b2b2b"/>
<rect x="617" y="145" width="1" height="3" fill="#2b2b2b"/>
<rect x="625" y="143" width="1" height="5" fill="#2b2b2b"/>
<rect x="634" y="145" width="1" height="3" fill="#2b2b2b"/>
<rect x="643" y="143" width="1" height="5" fill="#2b2b2b"/>
<rect x="652" y="145" width="1" height="3" fill="#2b2b2b"/>
<rect x="660" y="143" width="1" height="5" fill="#2b2b2b"/>
<rect x="669" y="145" width="1" height="3" fill="#2b2b2b"/>
<rect x="678" y="143" width="1" height="5" fill="#2b2b2b"/>
<rect x="687" y="145" width="1" height="3" fill="#2b2b2b"/>
<rect x="695" y="136" width="1" height="12" fill="#2b2b2b"/>
<rect x="704" y="145" width="1" height="3" fill="#2b2b2b"/>
<rect x="713" y="143" width="1" height="5" fill="#2b2b2b"/>
<rect x="722" y="145" width="1" height="3" fill="#2b2b2b"/>
<rect x="730" y="143" width="1" height="5" fill="#2b2b2b"/>
<rect x="739" y="145" width="1" height="3" fill="#2b2b2b"/>
<rect x="748" y="143" width="1" height="5" fill="#2b2b2b"/>
<rect x="757" y="145" width="1" height="3" fill="#2b2b2b"/>
<rect x="765" y="143" width="1" height="5" fill="#2b2b2b"/>
<rect x="774" y="145" width="1" height="3" fill="#2b2b2b"/>
<rect x="783" y="136" width="1" height="12" fill="#2b2b2b"/>
<rect x="792" y="145" width="1" height="3" fill="#2b2b2b"/>
<rect x="800" y="143" width="1" height="5" fill="#2b2b2b"/>
<rect x="809" y="145" width="1" height="3" fill="#2b2b2b"/>
<rect x="818" y="143" width="1" height="5" fill="#2b2b2b"/>
<rect x="827" y="145" width="1" height="3" fill="#2b2b2b"/>
<rect x="835" y="143" width="1" height="5" fill="#2b2b2b"/>
<rect x="844" y="145" width="1" height="3" fill="#2b2b2b"/>
<rect x="853" y="143" width="1" height="5" fill="#2b2b2b"/>
<rect x="862" y="145" width="1" height="3" fill="#2b2b2b"/>
<rect x="870" y="136" width="1" height="12" fill="#2b2b2b"/>
<rect x="879" y="145" width="1" height="3" fill="#2b2b2b"/>
<rect x="888" y="143" width="1" height="5" fill="#2b2b2b"/>
<rect x="897" y="145" width="1" height="3" fill="#2b2b2b"/>
<rect x="905" y="143" width="1" height="5" fill="#2b2b2b"/>
<rect x="914" y="145" width="1" height="3" fill="#2b2b2b"/>
<rect x="923" y="143" width="1" height="5" fill="#2b2b2b"/>
<rect x="932" y="145" width="1" height="3" fill="#2b2b2b"/>
<rect x="940" y="143" width="1" height="5" fill="#2b2b2b"/>
<rect x="949" y="145" width="1" height="3" fill="#2b2b2b"/>
<rect x="958" y="136" width="1" height="12" fill="#2b2b2b"/>
<rect x="967" y="145" width="1" height="3" fill="#2b2b2b"/>
<rect x="975" y="143" width="1" height="5" fill="#2b2b2b"/>
<rect x="984" y="145" width="1" height="3" fill="#2b2b2b"/>
<rect x="993" y="143" width="1" height="5" fill="#2b2b2b"/>
<rect x="1002" y="145" width="1" height="3" fill="#2b2b2b"/>
<rect x="1010" y="143" width="1" height="5" fill="#2b2b2b"/>
<rect x="1019" y="145" width="1" height="3" fill="#2b2b2b"/>
<rect x="1028" y="143" width="1" height="5" fill="#2b2b2b"/>
<rect x="1037" y="145" width="1" height="3" fill="#2b2b2b"/>
<rect x="1045" y="136" width="1" height="12" fill="#2b2b2b"/>
<rect x="1054" y="145" width="1" height="3" fill="#2b2b2b"/>
<rect x="1063" y="143" width="1" height="5" fill="#2b2b2b"/>
<rect x="1072" y="145" width="1" height="3" fill="#2b2b2b"/>
<rect x="1080" y="143" width="1" height="5" fill="#2b2b2b"/>
<rect x="1089" y="145" width="1" height="3" fill="#2b2b2b"/>
<rect x="1098" y="143" width="1" height="5" fill="#2b2b2b"/>
<rect x="1107" y="145" width="1" height="3" fill="#2b2b2b"/>
<rect x="1115" y="143" width="1" height="5" fill="#2b2b2b"/>
<rect x="1124" y="145" width="1" height="3" fill="#2b2b2b"/>
<rect x="1133" y="136" width="1" height="12" fill="#2b2b2b"/>
<rect x="1142" y="145" width="1" height="3" fill="#2b2b2b"/>
<rect x="1150" y="143" width="1" height="5" fill="#2b2b2b"/>
<rect x="1159" y="145" width="1" height="3" fill="#2b2b2b"/>
<rect x="1168" y="143" width="1" height="5" fill="#2b2b2b"/>
<rect x="1177" y="145" width="1" height="3" fill="#2b2b2b"/>
<rect x="1185" y="143" width="1" height="5" fill="#2b2b2b"/>
<rect x="1194" y="145" width="1" height="3" fill="#2b2b2b"/>
<rect x="1203" y="143" width="1" height="5" fill="#2b2b2b"/>
<rect x="1212" y="145" width="1" height="3" fill="#2b2b2b"/>
<rect x="1220" y="136" width="1" height="12" fill="#2b2b2b"/>
<rect x="1229" y="145" width="1" height="3" fill="#2b2b2b"/>
<rect x="1238" y="143" width="1" height="5" fill="#2b2b2b"/>
<rect x="1247" y="145" width="1" height="3" fill="#2b2b2b"/>
<rect x="53" y="150" width="1" height="532" fill="#2b2b2b"/>
<rect x="50" y="159" width="3" height="1" fill="#2b2b2b"/>
<rect x="48" y="176" width="5" height="1" fill="#2b2b2b"/>
<rect x="50" y="194" width="3" height="1" fill="#2b2b2b"/>
<rect x="48" y="211" width="5" height="1" fill="#2b2b2b"/>
<rect x="50" y="229" width="3" height="1" fill="#2b2b2b"/>
<rect x="41" y="246" width="12" height="1" fill="#2b2b2b"/>
<rect x="50" y="264" width="3" height="1" fill="#2b2b2b"/>
<rect x="48" y="281" width="5" height="1" fill="#2b2b2b"/>
<rect x="50" y="299" width="3" height="1" fill="#2b2b2b"/>
<rect x="48" y="316" width="5" height="1" fill="#2b2b2b"/>
<rect x="50" y="334" width="3" height="1" fill="#2b2b2b"/>
<rect x="48" y="351" width="5" height="1" fill="#2b2b2b"/>
<rect x="50" y="369" width="3" height="1" fill="#2b2b2b"/>
<rect x="48" y="386" width="5" height="1" fill="#2b2b2b"/>
<rect x="50" y="404" width="3" height="1" fill="#2b2b2b"/>
<rect x="41" y="421" width="12" height="1" fill="#2b2b2b"/>
<rect x="50" y="439" width="3" height="1" fill="#2b2b2b"/>
<rect x="48" y="456" width="5" height="1" fill="#2b2b2b"/>
<rect x="50" y="474" width="3" height="1" fill="#2b2b2b"/>
<rect x="48" y="491" width="5" height="1" fill="#2b2b2b"/>
<rect x="50" y="509" width="3" height="1" fill="#2b2b2b"/>
<rect x="48" y="526" width="5" height="1" fill="#2b2b2b"/>
<rect x="50" y="544" width="3" height="1" fill="#2b2b2b"/>
<rect x="48" y="561" width="5" height="1" fill="#2b2b2b"/>
<rect x="50" y="579" width="3" height="1" fill="#2b2b2b"/>
<rect x="41" y="596" width="12" height="1" fill="#2b2b2b"/>
<rect x="50" y="614" width="3" height="1" fill="#2b2b2b"/>
<rect x="48" y="631" width="5" height="1" fill="#2b2b2b"/>
<rect x="50" y="649" width="3" height="1" fill="#2b2b2b"/>
<rect x="48" y="666" width="5" height="1" fill="#2b2b2b"/>
<path d="M1185.5 144 L1194.5 144 L1190 148.5 Z" fill="#2b2b2b" shape-rendering="auto"/>
<path d="M49 426.5 L49 435.5 L53.5 431 Z" fill="#2b2b2b" shape-rendering="auto"/>
<rect x="523" y="597" width="260" height="2" fill="#666"/>
<rect x="781" y="231" width="2" height="368" fill="#666"/>
<rect x="520.5" y="228.5" width="260" height="368" fill="#fff" stroke="#666" stroke-width="1"/>
</svg>
<span class="rtxt" style="left:85px;top:136.5px">-1250</span>
<span class="rtxt" style="left:172px;top:136.5px">-1000</span>
<span class="rtxt" style="left:260px;top:136.5px">-750</span>
<span class="rtxt" style="left:347px;top:136.5px">-500</span>
<span class="rtxt" style="left:435px;top:136.5px">-250</span>
<span class="rtxt" style="left:522px;top:136.5px">0</span>
<span class="rtxt" style="left:610px;top:136.5px">250</span>
<span class="rtxt" style="left:697px;top:136.5px">500</span>
<span class="rtxt" style="left:785px;top:136.5px">750</span>
<span class="rtxt" style="left:872px;top:136.5px">1000</span>
<span class="rtxt" style="left:960px;top:136.5px">1250</span>
<span class="rtxt" style="left:1047px;top:136.5px">1500</span>
<span class="rtxt" style="left:1135px;top:136.5px">1750</span>
<span class="rtxt" style="left:1222px;top:136.5px">2k</span>
<span class="rtxt" style="left:41.5px;top:246.3px;width:7px;line-height:9.1px;white-space:normal;word-break:break-all;letter-spacing:0">1000</span>
<span class="rtxt" style="left:41.5px;top:421.3px;width:7px;line-height:9.1px;white-space:normal;word-break:break-all;letter-spacing:0">500</span>
<span class="rtxt" style="left:41.5px;top:596.3px;width:7px;line-height:9.1px;white-space:normal;word-break:break-all;letter-spacing:0">0</span>
<div class="abs" style="left:1253px;top:156px;width:13px;height:527px;background:#c4c4c3"></div>
<div class="abs" style="left:1257px;top:310px;width:6px;height:221px;background:#7e8181;border-radius:3px"></div>
<div class="abs" style="left:54px;top:685px;width:1195px;height:13px;background:#c4c4c3"></div>
<div class="abs" style="left:57px;top:689px;width:1189px;height:6px;background:#7e8181;border-radius:3px"></div>
<svg class="ic" style="left:1256px;top:140px" width="8" height="10" viewBox="0 0 8 10"><path d="M1.2 3.8 L4.6 1.4 H6.6 V9 H3.8 V4.6 L1.2 5.6 Z" fill="#fff" stroke="#777" stroke-width="0.8"/></svg>

<svg class="ic" style="left:1256.5px;top:688.5px" width="7" height="7" viewBox="0 0 7 7"><g transform="scale(0.85)"><rect x="0.5" y="0.5" width="2.2" height="2.2" fill="#d03030"/><rect x="3" y="1.5" width="2.2" height="2.2" fill="#30a030"/><rect x="5.4" y="2.8" width="2.2" height="2.2" fill="#3050d0"/><rect x="1" y="3.6" width="2" height="2" fill="#c0a020"/><rect x="3.4" y="5.4" width="2.2" height="2.2" fill="#a030a0"/><rect x="5.8" y="5.6" width="1.8" height="1.8" fill="#30a0a0"/></g></svg>

<div class="vsep" style="left:1275px;top:134px;height:566px;background:#a9a9a9"></div>
<svg class="ic" style="left:1291px;top:143px" width="24" height="24" viewBox="0 0 24 24"><path d="M2.5 3.5 Q2.5 2.5 3.5 2.5 H19 Q20 2.5 20 3.5 V21.5 Q20 22.5 19 22.5 H3.5 Q2.5 22.5 2.5 21.5 Z" fill="url(#gPage)" stroke="#a4a6a6" stroke-width="1"/><path d="M3 23 H19.5" stroke="#8a8c8c" stroke-width="0.8"/>
<path d="M17.6 1.6 L19.4 5 L23.2 5.6 L20.6 8.4 L21.2 12.2 L17.6 10.4 L14 12.2 L14.8 8.4 L12 5.6 L15.8 5 Z" fill="#fff8c4" stroke="#eadc2c" stroke-width="1.4" stroke-linejoin="round"/></svg>

<svg class="ic" style="left:1291px;top:177px" width="24" height="24" viewBox="0 0 24 24"><path d="M3.5 3.5 H10 L12 5.5 H20 V12 H3.5 Z" fill="url(#gFold)" stroke="#6e5a3c" stroke-width="1"/>
<rect x="7" y="7.5" width="12" height="9" fill="#f4f4f2" stroke="#9a9a96" stroke-width="0.8"/><path d="M9 10.4 H17 M9 12.6 H17" stroke="#b9b9b5" stroke-width="1"/>
<path d="M1.6 13.5 H22.4 L21 20.5 Q20.8 21.5 19.8 21.5 H4.2 Q3.2 21.5 3 20.5 Z" fill="url(#gFold2)" stroke="#6e5a3c" stroke-width="1"/></svg>

<svg class="ic" style="left:1291px;top:211px" width="24" height="24" viewBox="0 0 24 24"><rect x="3.5" y="2.5" width="17" height="20" rx="1.6" fill="#e4e6e4" stroke="#9fa19f" stroke-width="1"/><rect x="5" y="4" width="14" height="10.4" fill="#f6f7f6"/>
<rect x="5" y="15.4" width="14" height="5.6" rx="0.8" fill="#cdd0cd" stroke="#8e918e" stroke-width="0.8"/><rect x="8.2" y="17.2" width="7.6" height="2" rx="1" fill="#f4f4f4" stroke="#777" stroke-width="0.7"/>
<path d="M9.6 1.8 H14.4 V7.6 H18 L12 14 L6 7.6 H9.6 Z" fill="url(#gGreen)" stroke="#3a8a10" stroke-width="1"/></svg>

<svg class="ic" style="left:1291px;top:246px" width="24" height="24" viewBox="0 0 24 24"><path d="M5.5 2.5 H18.5 V8 H5.5 Z" fill="#e9e9e7" stroke="#444" stroke-width="1"/><path d="M7.5 4.8 H12 M13.4 4.8 H16.4" stroke="#666" stroke-width="1.1"/>
<rect x="1.5" y="7.5" width="21" height="10" rx="1.6" fill="#444846" stroke="#1c1e1c" stroke-width="1"/><rect x="2.6" y="8.6" width="18.8" height="2.4" fill="#8a8e8a"/>
<path d="M4.5 14.5 H19.5 L20.5 21.5 H3.5 Z" fill="#f4f4f2" stroke="#333" stroke-width="1"/><path d="M7 16.6 L12 19.4 L16.4 16.8" stroke="#7fbf5a" stroke-width="1.2" fill="none"/></svg>

<svg class="ic" style="left:1291px;top:291px" width="24" height="24" viewBox="0 0 24 24"><path d="M8.5 3.5 H16.5 L20.5 7.5 V21.5 H8.5 Z" fill="url(#gPage)" stroke="#222" stroke-width="1"/><path d="M16.5 3.5 V7.5 H20.5" fill="none" stroke="#222" stroke-width="1"/><path d="M3 12 H10" stroke="#000" stroke-width="1.6"/><path d="M9.4 8.6 L14 12 L9.4 15.4 Z" fill="#000"/></svg>

<svg class="ic" style="left:1291px;top:325px" width="24" height="24" viewBox="0 0 24 24"><path d="M3.5 3.5 H11.5 L15.5 7.5 V21.5 H3.5 Z" fill="url(#gPage)" stroke="#222" stroke-width="1"/><path d="M11.5 3.5 V7.5 H15.5" fill="none" stroke="#222" stroke-width="1"/><path d="M10.5 13 H17.5" stroke="#000" stroke-width="1.6"/><path d="M17 9.7 L21.4 13 L17 16.3 Z" fill="#000"/></svg>

<svg class="ic" style="left:1291px;top:370px" width="24" height="24" viewBox="0 0 24 24"><path d="M10.5 2.6 V6.6 H14.6 Q22 7 22 13.4 Q22 18.6 16.4 19.6 Q18.2 17.4 17.8 15 Q17.2 12.6 14.6 12.6 H10.5 V16.8 L1.6 9.7 Z" fill="url(#stO)"/><path d="M10.5 2.6 V6.6 H14.6 Q22 7 22 13.4 Q22 18.6 16.4 19.6 Q18.2 17.4 17.8 15 Q17.2 12.6 14.6 12.6 H10.5 V16.8 L1.6 9.7 Z" fill="none" stroke="url(#stOd)" stroke-width="1.5"/></svg>

<svg class="ic" style="left:1291px;top:404px" width="24" height="24" viewBox="0 0 24 24"><path d="M13.5 2.6 V6.6 H9.4 Q2 7 2 13.4 Q2 18.6 7.6 19.6 Q5.8 17.4 6.2 15 Q6.8 12.6 9.4 12.6 H13.5 V16.8 L22.4 9.7 Z" fill="url(#stO)"/><path d="M13.5 2.6 V6.6 H9.4 Q2 7 2 13.4 Q2 18.6 7.6 19.6 Q5.8 17.4 6.2 15 Q6.8 12.6 9.4 12.6 H13.5 V16.8 L22.4 9.7 Z" fill="none" stroke="url(#stOd)" stroke-width="1.5"/></svg>

<svg class="ic" style="left:1291px;top:450px" width="24" height="24" viewBox="0 0 24 24"><rect x="2.5" y="3.5" width="12" height="12" fill="#fbfbfb" stroke="#8e908e" stroke-width="1"/><path d="M4.6 6.4 H12.4 M4.6 8.6 H12.4 M4.6 10.8 H12.4 M4.6 13 H9" stroke="#999" stroke-width="0.9"/><rect x="9.5" y="10.5" width="12" height="11" fill="#fbfbfb" stroke="#8e908e" stroke-width="1"/><path d="M11.6 13.4 H19.4 M11.6 15.6 H19.4 M11.6 17.8 H19.4 M11.6 19.6 H16" stroke="#999" stroke-width="0.9"/></svg>

<svg class="ic" style="left:1291px;top:484px" width="24" height="24" viewBox="0 0 24 24"><path d="M5 1.4 Q4.6 7 12.6 15.6 L14.2 14 Q8.6 8 5 1.4 Z" fill="#f2f3f3" stroke="#777" stroke-width="0.8"/><path d="M19.4 1.4 Q19.8 7 11.8 15.6 L10.2 14 Q15.8 8 19.4 1.4 Z" fill="#fafafa" stroke="#777" stroke-width="0.8"/>
<circle cx="7.6" cy="18.6" r="3.1" fill="#fff" stroke="#d8141c" stroke-width="2.3"/><circle cx="16.6" cy="18.6" r="3.1" fill="#fff" stroke="#d8141c" stroke-width="2.3"/><circle cx="7.6" cy="18.6" r="1.3" fill="none" stroke="#e0444a" stroke-width="0.8"/><circle cx="16.6" cy="18.6" r="1.3" fill="none" stroke="#e0444a" stroke-width="0.8"/></svg>

<svg class="ic" style="left:1291px;top:518px" width="24" height="24" viewBox="0 0 24 24"><rect x="2.5" y="4.5" width="17.5" height="17.5" rx="1.6" fill="#eeb76a" stroke="#a4702a" stroke-width="1"/><path d="M7 6.6 V4.6 Q7 3.6 8 3.6 H9.4 Q9.8 1.6 11.2 1.6 Q12.6 1.6 13 3.6 H14.4 Q15.4 3.6 15.4 4.6 V6.6 Z" fill="#e4e6e4" stroke="#777" stroke-width="0.9"/>
<rect x="10.5" y="10.5" width="12" height="12" fill="#fbfbfb" stroke="#8e908e" stroke-width="1"/><path d="M12.6 13.6 H20.4 M12.6 15.8 H20.4 M12.6 18 H20.4 M12.6 20 H17" stroke="#999" stroke-width="0.9"/></svg>

<svg class="ic" style="left:1291px;top:564px" width="24" height="24" viewBox="0 0 24 24"><path d="M18.2 18.2 L20.6 20.6" stroke="#111" stroke-width="2.6" stroke-linecap="round"/><circle cx="12.2" cy="12.2" r="8" fill="url(#gLensBtn)" stroke="#1a1a2a" stroke-width="1.5"/><rect x="7.4" y="8.2" width="9.6" height="7.8" fill="#fff" stroke="#111" stroke-width="1" stroke-dasharray="1.4 1"/></svg>

<svg class="ic" style="left:1291px;top:598px" width="24" height="24" viewBox="0 0 24 24"><path d="M18.2 18.2 L20.6 20.6" stroke="#111" stroke-width="2.6" stroke-linecap="round"/><circle cx="12.2" cy="12.2" r="8" fill="url(#gLensBtn)" stroke="#1a1a2a" stroke-width="1.5"/><rect x="7" y="6.8" width="6.2" height="6.2" fill="#e8d27c" stroke="#5a5020" stroke-width="0.9"/><rect x="10.4" y="10.2" width="6.6" height="6.6" fill="#f2e08c" stroke="#5a5020" stroke-width="0.9"/></svg>

<svg class="ic" style="left:1291px;top:632px" width="24" height="24" viewBox="0 0 24 24"><path d="M18.2 18.2 L20.6 20.6" stroke="#111" stroke-width="2.6" stroke-linecap="round"/><circle cx="12.2" cy="12.2" r="8" fill="url(#gLensBtn)" stroke="#1a1a2a" stroke-width="1.5"/><rect x="8.2" y="6.8" width="8" height="10.6" fill="#f2f2f2" stroke="#333" stroke-width="1"/><path d="M15.4 7.6 V16.6 H9" stroke="#aaa" stroke-width="1" fill="none"/></svg>

<div class="hsep" style="left:1292px;top:279px;width:21px"></div>
<div class="hsep" style="left:1292px;top:359px;width:21px"></div>
<div class="hsep" style="left:1292px;top:439px;width:21px"></div>
<div class="hsep" style="left:1292px;top:553px;width:21px"></div>
<div class="abs" style="left:1300.5px;top:670px;width:0;height:0;border-top:5px solid transparent;border-bottom:5px solid transparent;border-left:5px solid #2e3436"></div>
<div class="tog" style="left:1329px;top:139px;width:32px;height:32px"></div>
<div class="tog" style="left:1329px;top:367px;width:32px;height:32px"></div>
<div class="tog" style="left:1329px;top:583px;width:32px;height:32px"></div>
<svg class="ic" style="left:1337px;top:147px" width="16" height="16" viewBox="0 0 16 16"><path d="M1.8 -0.9 L4.9 2.2 L1.8 5.3 L-1.3 2.2 Z" fill="#8c8cf6" stroke="#1414d8" stroke-width="1.1"/><path d="M13 10.1 L16.3 13.4 L13 16.7 L9.7 13.4 Z" fill="#7fc49a" stroke="#167a3a" stroke-width="1.1"/><path d="M4 4.4 L9 9.4" stroke="#000" stroke-width="1.4"/><path d="M11.2 11.6 L6.4 10.4 L10 6.8 Z" fill="#000"/></svg>

<svg class="ic" style="left:1337px;top:192.5px" width="16" height="16" viewBox="0 0 16 16"><path d="M1.8 -0.9 L4.9 2.2 L1.8 5.3 L-1.3 2.2 Z" fill="#8c8cf6" stroke="#1414d8" stroke-width="1.1"/><path d="M13 10.1 L16.3 13.4 L13 16.7 L9.7 13.4 Z" fill="#7fc49a" stroke="#167a3a" stroke-width="1.1"/><path d="M4 4.4 L9 9.4" stroke="#000" stroke-width="1.4"/><path d="M11.2 11.6 L6.4 10.4 L10 6.8 Z" fill="#000"/></svg>

<svg class="ic" style="left:1337px;top:226px" width="16" height="16" viewBox="0 0 16 16"><path d="M0.5 15.5 H14.5" fill="none" stroke="#111" stroke-width="1" stroke-dasharray="1.5 1.2"/><path d="M14.5 15.5 V0.5" fill="none" stroke="#2a7a3a" stroke-width="1" stroke-dasharray="1.5 1.2"/></svg>

<svg class="ic" style="left:1337px;top:260px" width="16" height="16" viewBox="0 0 16 16"><path d="M-1 14.5 H16 M14 14.5 V1" fill="none" stroke="#111" stroke-width="1" stroke-dasharray="1.5 1.2"/><path d="M14 11.8 L16.7 14.5 L14 17.2 L11.3 14.5 Z" fill="#999" stroke="#333" stroke-width="0.8"/></svg>

<svg class="ic" style="left:1337px;top:294px" width="16" height="16" viewBox="0 0 16 16"><path d="M-0.5 14.5 H13.5 V7.5" fill="none" stroke="#111" stroke-width="1" stroke-dasharray="1.5 1.2"/><path d="M13 1.6 L15.6 4.6 L13 7.6 L10.4 4.6 Z" fill="#8aaa8a" stroke="#333" stroke-width="0.8"/></svg>

<svg class="ic" style="left:1337px;top:328px" width="16" height="16" viewBox="0 0 16 16"><path d="M0 14 H13.5 V1" fill="none" stroke="#111" stroke-width="1" stroke-dasharray="1.5 1.2"/><circle cx="3.5" cy="4.6" r="2" fill="#9ac49a" stroke="#444" stroke-width="0.9"/></svg>

<svg class="ic" style="left:1337px;top:375px" width="16" height="16" viewBox="0 0 16 16"><path d="M1.8 -0.9 L4.9 2.2 L1.8 5.3 L-1.3 2.2 Z" fill="#8c8cf6" stroke="#1414d8" stroke-width="1.1"/><path d="M13 10.1 L16.3 13.4 L13 16.7 L9.7 13.4 Z" fill="#7fc49a" stroke="#167a3a" stroke-width="1.1"/><path d="M4 4.4 L9 9.4" stroke="#000" stroke-width="1.4"/><path d="M11.2 11.6 L6.4 10.4 L10 6.8 Z" fill="#000"/></svg>

<svg class="ic" style="left:1337px;top:409px" width="16" height="16" viewBox="0 0 16 16"><path d="M1.6 1.4 Q11.6 3.6 12.4 13.4" fill="none" stroke="#0e8a1e" stroke-width="1.4"/><path d="M12.4 13.4 Q15.4 11.6 15.4 7" fill="none" stroke="#0e8a1e" stroke-width="1.4"/></svg>

<svg class="ic" style="left:1337px;top:443px" width="16" height="16" viewBox="0 0 16 16"><path d="M0.4 16 L16 0.6 M0 11.4 L16.4 5" stroke="#333" stroke-width="1"/><circle cx="8.2" cy="8" r="2.3" fill="#58a878" stroke="#1e5a38" stroke-width="0.9"/></svg>

<svg class="ic" style="left:1337px;top:478px" width="16" height="16" viewBox="0 0 16 16"><path d="M1.4 1.6 Q9.4 3.4 9 11.6" fill="none" stroke="#444" stroke-width="1"/><path d="M9 11.6 Q13 9.4 13.4 4" fill="none" stroke="#444" stroke-width="1"/><path d="M8.6 8.6 L11.6 11.6 L8.6 14.6 L5.6 11.6 Z" fill="#58a878" stroke="#1e5a38" stroke-width="0.9"/></svg>

<svg class="ic" style="left:1337px;top:511px" width="16" height="16" viewBox="0 0 16 16"><path d="M0.8 2.4 H4.6" stroke="#444" stroke-width="1"/><path d="M8.4 6 Q9.4 13.4 11.8 14 Q14.2 14.2 14.6 9" fill="none" stroke="#444" stroke-width="1"/><rect x="4.6" y="1.4" width="4.6" height="4.6" fill="#58a878" stroke="#1e5a38" stroke-width="0.9"/></svg>

<svg class="ic" style="left:1337px;top:545px" width="16" height="16" viewBox="0 0 16 16"><path d="M0.8 14.4 L15.4 2" stroke="#e01818" stroke-width="1"/><path d="M2.6 8.6 L5.8 15 M4.8 7 L8 13.4 M9.6 3 L12.8 9.4 M11.8 1.2 L15 7.6" stroke="#e01818" stroke-width="1.1"/><circle cx="8" cy="8.2" r="2.2" fill="#58a878" stroke="#1e5a38" stroke-width="0.9"/></svg>

<svg class="ic" style="left:1337px;top:591px" width="16" height="16" viewBox="0 0 16 16"><path d="M1.8 -0.9 L4.9 2.2 L1.8 5.3 L-1.3 2.2 Z" fill="#8c8cf6" stroke="#1414d8" stroke-width="1.1"/><path d="M13 10.1 L16.3 13.4 L13 16.7 L9.7 13.4 Z" fill="#7fc49a" stroke="#167a3a" stroke-width="1.1"/><path d="M4 4.4 L9 9.4" stroke="#000" stroke-width="1.4"/><path d="M11.2 11.6 L6.4 10.4 L10 6.8 Z" fill="#000"/></svg>

<svg class="ic" style="left:1337px;top:623px" width="16" height="16" viewBox="0 0 16 16"><path d="M-1 14.5 H13.5 V1.5" fill="none" stroke="#777" stroke-width="1"/><circle cx="5" cy="7" r="2" fill="#9ad09a" stroke="#1e7a38" stroke-width="1"/></svg>

<div class="hsep" style="left:1334px;top:177px;width:21px"></div>
<div class="hsep" style="left:1334px;top:359px;width:21px"></div>
<div class="hsep" style="left:1334px;top:575px;width:21px"></div>
<div class="abs" style="left:1342.5px;top:670px;width:0;height:0;border-top:5px solid transparent;border-bottom:5px solid transparent;border-left:5px solid #2e3436"></div>
<div class="abs" style="left:0;top:702px;width:17px;height:16px;background:#fff"><svg width="17" height="16" viewBox="0 0 17 16" style="position:absolute;left:0;top:0"><path d="M0.5 0.5 L16.5 15.5 M16.5 0.5 L0.5 15.5" stroke="#801010" stroke-width="1.8"/></svg></div>
<div class="abs" style="left:17px;top:702px;width:1336px;height:16px;overflow:hidden;white-space:nowrap;font-size:0">
<i style="display:inline-block;width:16px;height:16px;background:#000000"></i>
<i style="display:inline-block;width:16px;height:16px;background:#1a1a1a"></i>
<i style="display:inline-block;width:16px;height:16px;background:#333333"></i>
<i style="display:inline-block;width:16px;height:16px;background:#4d4d4d"></i>
<i style="display:inline-block;width:16px;height:16px;background:#666666"></i>
<i style="display:inline-block;width:16px;height:16px;background:#808080"></i>
<i style="display:inline-block;width:16px;height:16px;background:#999999"></i>
<i style="display:inline-block;width:16px;height:16px;background:#b3b3b3"></i>
<i style="display:inline-block;width:16px;height:16px;background:#cccccc"></i>
<i style="display:inline-block;width:16px;height:16px;background:#e6e6e6"></i>
<i style="display:inline-block;width:16px;height:16px;background:#ececec"></i>
<i style="display:inline-block;width:16px;height:16px;background:#f2f2f2"></i>
<i style="display:inline-block;width:16px;height:16px;background:#f9f9f9"></i>
<i style="display:inline-block;width:16px;height:16px;background:#ffffff"></i>
<i style="display:inline-block;width:16px;height:16px;background:#800000"></i>
<i style="display:inline-block;width:16px;height:16px;background:#ff0000"></i>
<i style="display:inline-block;width:16px;height:16px;background:#808000"></i>
<i style="display:inline-block;width:16px;height:16px;background:#ffff00"></i>
<i style="display:inline-block;width:16px;height:16px;background:#008000"></i>
<i style="display:inline-block;width:16px;height:16px;background:#00ff00"></i>
<i style="display:inline-block;width:16px;height:16px;background:#008080"></i>
<i style="display:inline-block;width:16px;height:16px;background:#00ffff"></i>
<i style="display:inline-block;width:16px;height:16px;background:#000080"></i>
<i style="display:inline-block;width:16px;height:16px;background:#0000ff"></i>
<i style="display:inline-block;width:16px;height:16px;background:#800080"></i>
<i style="display:inline-block;width:16px;height:16px;background:#ff00ff"></i>
<i style="display:inline-block;width:16px;height:16px;background:#2b0000"></i>
<i style="display:inline-block;width:16px;height:16px;background:#550000"></i>
<i style="display:inline-block;width:16px;height:16px;background:#800000"></i>
<i style="display:inline-block;width:16px;height:16px;background:#aa0000"></i>
<i style="display:inline-block;width:16px;height:16px;background:#d40000"></i>
<i style="display:inline-block;width:16px;height:16px;background:#ff0000"></i>
<i style="display:inline-block;width:16px;height:16px;background:#ff2a2a"></i>
<i style="display:inline-block;width:16px;height:16px;background:#ff5555"></i>
<i style="display:inline-block;width:16px;height:16px;background:#ff8080"></i>
<i style="display:inline-block;width:16px;height:16px;background:#ffaaaa"></i>
<i style="display:inline-block;width:16px;height:16px;background:#ffd5d5"></i>
<i style="display:inline-block;width:16px;height:16px;background:#280b0b"></i>
<i style="display:inline-block;width:16px;height:16px;background:#501616"></i>
<i style="display:inline-block;width:16px;height:16px;background:#782121"></i>
<i style="display:inline-block;width:16px;height:16px;background:#a02c2c"></i>
<i style="display:inline-block;width:16px;height:16px;background:#c83737"></i>
<i style="display:inline-block;width:16px;height:16px;background:#d35f5f"></i>
<i style="display:inline-block;width:16px;height:16px;background:#de8787"></i>
<i style="display:inline-block;width:16px;height:16px;background:#e9afaf"></i>
<i style="display:inline-block;width:16px;height:16px;background:#f4d7d7"></i>
<i style="display:inline-block;width:16px;height:16px;background:#241c1c"></i>
<i style="display:inline-block;width:16px;height:16px;background:#483737"></i>
<i style="display:inline-block;width:16px;height:16px;background:#6c5353"></i>
<i style="display:inline-block;width:16px;height:16px;background:#916f6f"></i>
<i style="display:inline-block;width:16px;height:16px;background:#ac9393"></i>
<i style="display:inline-block;width:16px;height:16px;background:#c8b7b7"></i>
<i style="display:inline-block;width:16px;height:16px;background:#e3dbdb"></i>
<i style="display:inline-block;width:16px;height:16px;background:#2b1100"></i>
<i style="display:inline-block;width:16px;height:16px;background:#552200"></i>
<i style="display:inline-block;width:16px;height:16px;background:#803300"></i>
<i style="display:inline-block;width:16px;height:16px;background:#aa4400"></i>
<i style="display:inline-block;width:16px;height:16px;background:#d45500"></i>
<i style="display:inline-block;width:16px;height:16px;background:#ff6600"></i>
<i style="display:inline-block;width:16px;height:16px;background:#ff7f2a"></i>
<i style="display:inline-block;width:16px;height:16px;background:#ff9955"></i>
<i style="display:inline-block;width:16px;height:16px;background:#ffb380"></i>
<i style="display:inline-block;width:16px;height:16px;background:#ffccaa"></i>
<i style="display:inline-block;width:16px;height:16px;background:#ffe6d5"></i>
<i style="display:inline-block;width:16px;height:16px;background:#28170b"></i>
<i style="display:inline-block;width:16px;height:16px;background:#502d16"></i>
<i style="display:inline-block;width:16px;height:16px;background:#784421"></i>
<i style="display:inline-block;width:16px;height:16px;background:#a05a2c"></i>
<i style="display:inline-block;width:16px;height:16px;background:#c87137"></i>
<i style="display:inline-block;width:16px;height:16px;background:#d38d5f"></i>
<i style="display:inline-block;width:16px;height:16px;background:#deaa87"></i>
<i style="display:inline-block;width:16px;height:16px;background:#e9c6af"></i>
<i style="display:inline-block;width:16px;height:16px;background:#f4e3d7"></i>
<i style="display:inline-block;width:16px;height:16px;background:#241f1c"></i>
<i style="display:inline-block;width:16px;height:16px;background:#483e37"></i>
<i style="display:inline-block;width:16px;height:16px;background:#6c5d53"></i>
<i style="display:inline-block;width:16px;height:16px;background:#917c6f"></i>
<i style="display:inline-block;width:16px;height:16px;background:#ac9d93"></i>
<i style="display:inline-block;width:16px;height:16px;background:#c8beb7"></i>
<i style="display:inline-block;width:16px;height:16px;background:#e3dedb"></i>
<i style="display:inline-block;width:16px;height:16px;background:#2b2200"></i>
<i style="display:inline-block;width:16px;height:16px;background:#554400"></i>
<i style="display:inline-block;width:16px;height:16px;background:#806600"></i>
<i style="display:inline-block;width:16px;height:16px;background:#aa8800"></i>
<i style="display:inline-block;width:16px;height:16px;background:#d4aa00"></i>
</div>
<div class="abs" style="left:1357px;top:702px;width:0;height:0;border-top:5px solid transparent;border-bottom:5px solid transparent;border-right:5px solid #2e3436"></div>
<div class="abs" style="left:0;top:720px;width:1354px;height:13px;background:#c4c4c3"></div>
<div class="abs" style="left:3px;top:723.5px;width:257px;height:6px;background:#7e8181;border-radius:3px"></div>
<span class="sm" style="left:2.5px;top:736px">Fill:</span>
<span class="sm" style="left:2.5px;top:751px">Stroke:</span>
<span class="sm" style="left:72px;top:736px">N/A</span>
<span class="sm" style="left:72px;top:751px">N/A</span>
<span class="abs" style="left:126.5px;top:742px;line-height:17px;color:#2e3436;transform:scaleX(0.8);transform-origin:0 0">O:</span>
<div class="spin" style="left:141px;top:736px;width:46px;height:31px;"><span class="v" style="left:9.5px;top:6px">0</span><div class="d" style="right:14px"></div><div class="h" style="right:0;width:14px;top:14px"></div><div class="tri up" style="left:32.5px;top:4.25px"></div><div class="tri dn" style="left:32.5px;top:18.75px"></div></div>
<div class="vsep" style="left:190px;top:736px;height:31px"></div>
<svg class="ic" style="left:196.5px;top:744.5px" width="12" height="12" viewBox="0 0 12 12"><path d="M0.5 7 Q6 1.5 11.5 7 Q6 12 0.5 7 Z" fill="#fff" stroke="#111" stroke-width="1.2"/><circle cx="6" cy="6.8" r="2.3" fill="#111"/>
<path d="M2 3.2 L3 4.4 M4.4 1.6 L4.9 3.2 M7.6 1.6 L7.1 3.2 M10 3.2 L9 4.4" stroke="#111" stroke-width="1"/></svg>

<svg class="ic" style="left:219.5px;top:744.5px" width="12" height="12" viewBox="0 0 12 12"><path d="M2.6 1.1 H6.8 Q8.6 1.1 8.6 3 V5" fill="none" stroke="#222" stroke-width="1.2"/>
<path d="M1.9 5.2 H9.4 L10.2 10.8 H1.9 Z" fill="#f4f0a8" stroke="#1a1a1a" stroke-width="1.1" stroke-linejoin="round"/><path d="M2.8 6 H5 V10 H2.8 Z" fill="#fff" opacity="0.8"/><path d="M5 6.8 H7.2 L6.6 9.6 H5.6 Z" fill="#111"/></svg>

<div class="btn" style="left:237px;top:736px;width:96px;height:31px"><span style="position:absolute;left:10px;top:5px;line-height:17px;white-space:nowrap;font-size:13.6px;letter-spacing:-0.5px;-webkit-text-stroke:0.2px #2e3436">&#8226;Layer 1</span><div class="tri dn" style="left:72.5px;top:12.5px;border-top-color:#2e3436;border-left-width:5px;border-right-width:5px;border-top-width:5.5px"></div></div>
<span class="abs" style="left:339.5px;top:742.5px;line-height:17px;white-space:nowrap;color:#2e3436">No objects selected. Click, Shift+click, Alt+scroll mouse on top of objects, or drag around objects to select.</span>
<span class="sm" style="left:1208px;top:736px">X:</span>
<span class="sm" style="left:1208px;top:751px">Y:</span>
<span class="mono" style="left:1221px;top:736.7px">1914.29</span>
<span class="mono" style="left:1221px;top:752.2px"> 471.43</span>
<span class="abs" style="left:1277.5px;top:742px;line-height:17px;color:#2e3436;transform:scaleX(0.8);transform-origin:0 0">Z:</span>
<div class="spin" style="left:1291px;top:736px;width:55px;height:31px;background:#fff;border-color:#b5b5b5"><span class="v" style="left:15.5px;top:6.5px;color:#2e3436;font-size:12.4px;letter-spacing:-0.2px;transform:scaleX(0.86);transform-origin:0 0">35%</span><div class="d" style="left:39px"></div><div class="tri up" style="left:41.5px;top:5px;border-bottom-color:#2e3436;border-left-width:4.5px;border-right-width:4.5px"></div><div class="tri dn" style="left:41.5px;top:20px;border-top-color:#2e3436;border-left-width:4.5px;border-right-width:4.5px"></div></div>
<div class="vsep" style="left:1205px;top:736px;height:32px;background:#d4d4d4"></div>
</div></body></html>
